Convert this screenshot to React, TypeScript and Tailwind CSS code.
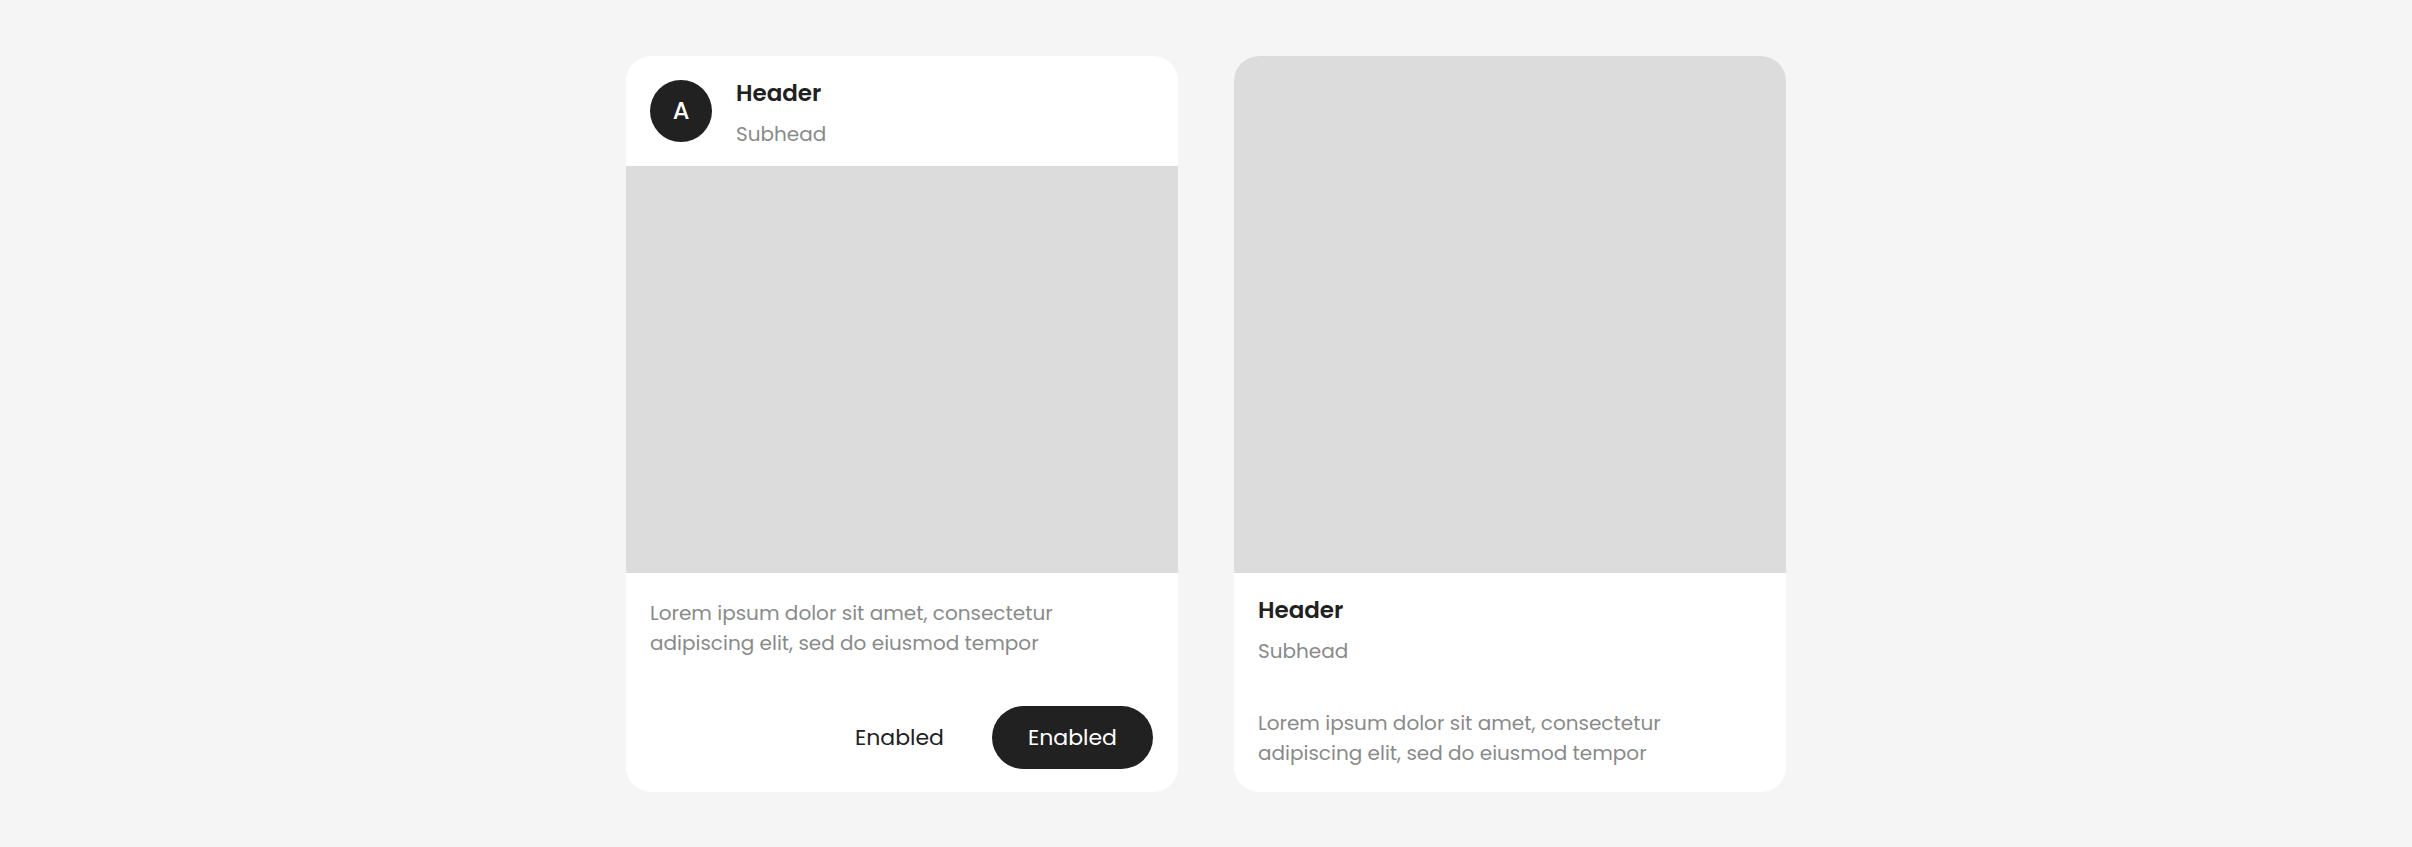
const copy = ['Lorem ipsum dolor sit amet, consectetur', 'adipiscing elit, sed do eiusmod tempor'];

function Heading() {
  return (
    <div>
      <h2 className="text-[23px] leading-[35px] font-semibold text-[#212121]">Header</h2>
      <p className="mt-2 text-[20px] leading-[30px] text-[#888b89]">Subhead</p>
    </div>
  );
}

function Copy() {
  return (
    <p className="text-[20px] leading-[30px] text-[#888b89]">
      {copy[0]}
      <br />
      {copy[1]}
    </p>
  );
}

export default function App() {
  return (
    <main className="flex min-h-screen items-start justify-center gap-14 bg-[#f5f5f5] px-6 py-14 font-['Poppins','Inter',sans-serif]">
      <article className="flex w-full max-w-[552px] flex-col overflow-hidden rounded-[25px] bg-white">
        <header className="flex items-start gap-6 px-6 pt-5 pb-[17px]">
          <div className="mt-1 flex size-[62px] items-center justify-center rounded-full bg-[#212121] text-2xl font-medium text-white">A</div>
          <Heading />
        </header>
        <div className="h-[407px] bg-[#dcdcdc]" />
        <div className="px-6 pt-[25px]">
          <Copy />
        </div>
        <div className="flex justify-end gap-3 px-[25px] pt-12 pb-[23px]">
          <button type="button" className="h-[63px] rounded-full px-9 text-[22px] text-[#212121]">Enabled</button>
          <button type="button" className="h-[63px] rounded-full bg-[#212121] px-9 text-[22px] text-white">Enabled</button>
        </div>
      </article>
      <article className="flex w-full max-w-[552px] flex-col overflow-hidden rounded-[25px] bg-white">
        <div className="h-[517px] bg-[#dcdcdc]" />
        <div className="px-6 pt-5 pb-6">
          <Heading />
          <div className="mt-[42px]">
            <Copy />
          </div>
        </div>
      </article>
    </main>
  );
}
